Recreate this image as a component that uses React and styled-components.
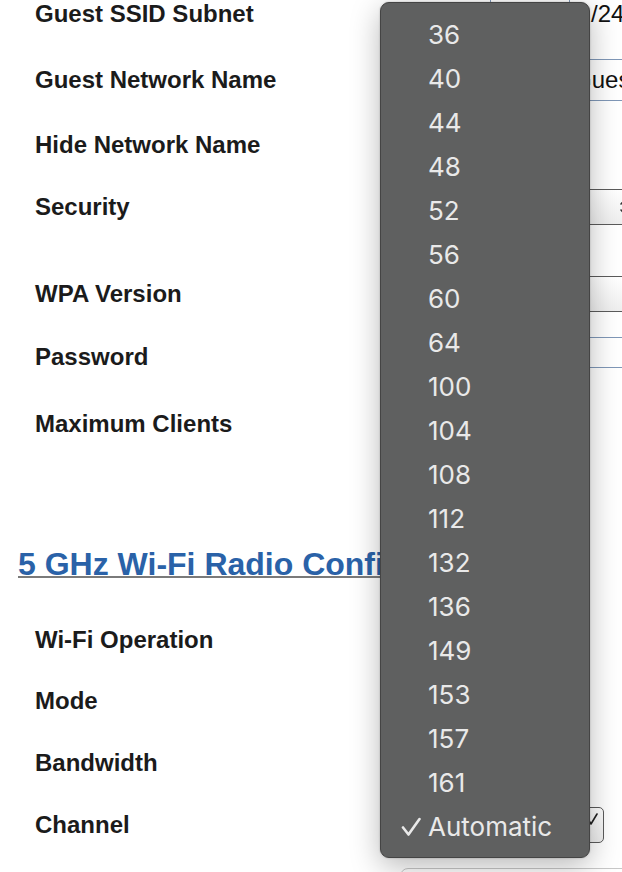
import React from "react";
import styled, { createGlobalStyle } from "styled-components";

const Global = createGlobalStyle`
  html, body { margin: 0; padding: 0; background: #fff; overflow: hidden; }
  body { font-family: "Liberation Sans", Arial, sans-serif; }
`;

const Page = styled.div`
  position: relative;
  width: 622px;
  height: 872px;
  overflow: hidden;
  background: #fff;
`;

const Form = styled.div`
  display: flex;
  flex-direction: column;
`;

const Row = styled.div`
  display: grid;
  grid-template-columns: 455px auto;
  grid-template-rows: 28px;
  align-items: center;
  padding-left: 35px;
  margin-top: ${(p) => p.$gap || 0}px;
`;

const Label = styled.div`
  font-weight: 700;
  font-size: 24px;
  line-height: 28px;
  color: #1b1b1b;
  white-space: nowrap;
`;

const Value = styled.div`
  display: flex;
  align-items: center;
  margin-bottom: ${(p) => p.$lift || 0}px;
`;

const TextBox = styled.div`
  box-sizing: border-box;
  width: ${(p) => p.$w}px;
  height: ${(p) => p.$h}px;
  border: 1px solid #7f97b7;
  padding: 0 10px;
  display: flex;
  align-items: center;
  font-size: 24px;
  color: #111;
  white-space: nowrap;
  overflow: hidden;
  background: #fff;
  flex-shrink: 0;
`;

const Suffix = styled.span`
  margin-left: 21px;
  font-size: 24px;
  line-height: 28px;
  color: #111;
`;

const Check = styled.div`
  width: 22px;
  height: 22px;
  box-sizing: border-box;
  border: 1px solid #777;
  border-radius: 4px;
  background: #fff;
`;

const Select = styled.div`
  box-sizing: border-box;
  width: ${(p) => p.$w}px;
  height: 36px;
  border: 1px solid #5b5b5b;
  border-radius: ${(p) => p.$r || 0}px;
  background: linear-gradient(#ffffff, #eeeeee);
  display: flex;
  align-items: center;
  justify-content: flex-end;
  padding-right: ${(p) => p.$pr || 6}px;
  flex-shrink: 0;
`;

const Chevron = styled.svg`
  display: block;
  margin-bottom: ${(p) => p.$lift || 0}px;
`;

const Heading = styled.h2`
  margin: 106px 0 0 18px;
  font-size: 32px;
  line-height: 40px;
  font-weight: 700;
  color: #2a62a8;
  white-space: nowrap;
  text-decoration: underline;
  text-decoration-color: #7a7a7a;
  text-decoration-thickness: 2px;
`;

const Footer = styled.div`
  margin: 29px 0 0 400px;
  height: 60px;
  border: 1px solid #c8c8c8;
  border-radius: 8px;
  background: #fff;
  width: 300px;
`;

const Menu = styled.ul`
  position: absolute;
  left: 380px;
  top: 2px;
  width: 210px;
  box-sizing: border-box;
  margin: 0;
  padding: 10px 0 8px;
  list-style: none;
  background: #5f6060;
  border: 1px solid #444;
  border-radius: 9px;
  box-shadow: 0 8px 30px rgba(0, 0, 0, 0.28), 0 0 2px rgba(0, 0, 0, 0.25);
  font-family: Inter, "Noto Sans", sans-serif;
`;

const Item = styled.li`
  display: grid;
  grid-template-columns: 47px 1fr;
  align-items: center;
  height: 44px;
  font-size: 26px;
  line-height: 44px;
  color: #e9e9e9;
`;

const CheckCell = styled.span`
  justify-self: end;
  margin-right: 7px;
  display: flex;
`;

const channels = [
  "36", "40", "44", "48", "52", "56", "60", "64", "100", "104",
  "108", "112", "132", "136", "149", "153", "157", "161", "Automatic",
];

const UpDown = () => (
  <Chevron width="12" height="20" viewBox="0 0 12 20">
    <path d="M2 7 L6 3 L10 7 M2 13 L6 17 L10 13" fill="none" stroke="#333" strokeWidth="1.6" strokeLinecap="round" strokeLinejoin="round" />
  </Chevron>
);

export default function App() {
  return (
    <>
      <Global />
      <Page>
        <Form>
          <Row>
            <Label>Guest SSID Subnet</Label>
            <Value>
              <TextBox $w={80} $h={40} />
              <Suffix>/24</Suffix>
            </Value>
          </Row>
          <Row $gap={38}>
            <Label>Guest Network Name</Label>
            <Value>
              <TextBox $w={300} $h={42}>Home-Guest</TextBox>
            </Value>
          </Row>
          <Row $gap={37}>
            <Label>Hide Network Name</Label>
            <Value>
              <Check />
            </Value>
          </Row>
          <Row $gap={34}>
            <Label>Security</Label>
            <Value>
              <Select $w={148}>
                <UpDown />
              </Select>
            </Value>
          </Row>
          <Row $gap={59}>
            <Label>WPA Version</Label>
            <Value>
              <Select $w={200}>
                <UpDown />
              </Select>
            </Value>
          </Row>
          <Row $gap={35}>
            <Label>Password</Label>
            <Value $lift={9}>
              <TextBox $w={260} $h={31} />
            </Value>
          </Row>
          <Row $gap={39}>
            <Label>Maximum Clients</Label>
            <Value>
              <TextBox $w={70} $h={36} />
            </Value>
          </Row>

          <Heading>5 GHz Wi-Fi Radio Configuration</Heading>

          <Row $gap={42}>
            <Label>Wi-Fi Operation</Label>
            <Value>
              <Select $w={90} $r={5} />
            </Value>
          </Row>
          <Row $gap={33}>
            <Label>Mode</Label>
            <Value>
              <Select $w={90} $r={5} />
            </Value>
          </Row>
          <Row $gap={34}>
            <Label>Bandwidth</Label>
            <Value>
              <Select $w={90} $r={5} />
            </Value>
          </Row>
          <Row $gap={34}>
            <Label>Channel</Label>
            <Value>
              <Select $w={114} $r={5} $pr={5}>
                <Chevron $lift={12} width="14" height="14" viewBox="0 0 14 14">
                  <path d="M1 2 L7 12 L13 2" fill="none" stroke="#222" strokeWidth="1.6" strokeLinecap="round" strokeLinejoin="round" />
                </Chevron>
              </Select>
            </Value>
          </Row>
          <Footer />
        </Form>

        <Menu>
          {channels.map((c) => (
            <Item key={c}>
              <CheckCell>
                {c === "Automatic" && (
                  <svg width="20" height="20" viewBox="0 0 20 20">
                    <path d="M2 10.5 L7.5 17.5 L18.5 2" fill="none" stroke="#e9e9e9" strokeWidth="2.6" strokeLinecap="round" strokeLinejoin="round" />
                  </svg>
                )}
              </CheckCell>
              <span>{c}</span>
            </Item>
          ))}
        </Menu>
      </Page>
    </>
  );
}
